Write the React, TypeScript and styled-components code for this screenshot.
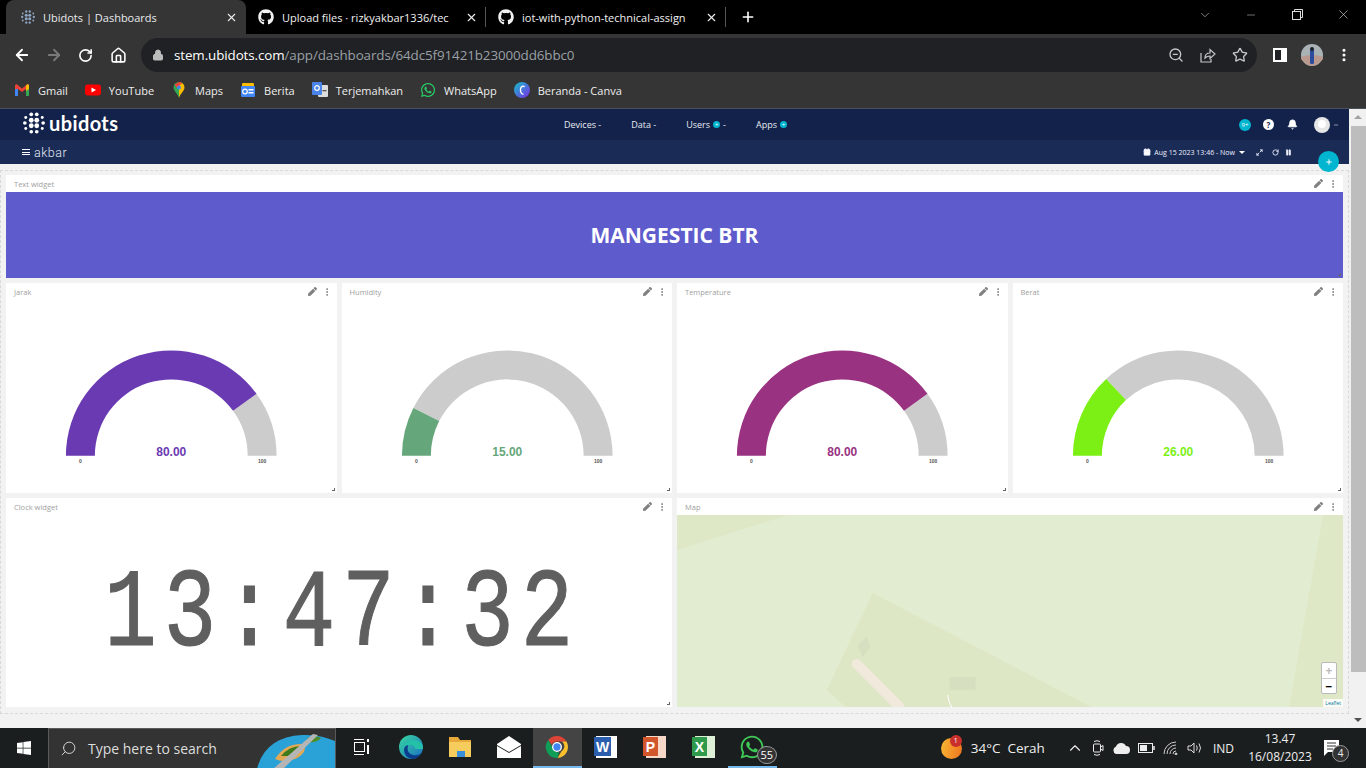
import React from "react";
import styled, { createGlobalStyle } from "styled-components";
import {
  ArrowLeft,
  ArrowRight,
  RotateCw,
  Home,
  Lock,
  ZoomOut,
  Star,
  X,
  Plus,
  ChevronDown,
  ChevronUp,
  Minus,
  Search,
  Bell,
  Maximize2,
  Pause,
  Calendar,
  MoreVertical,
} from "lucide-react";
import { FaGithub, FaWhatsapp, FaWindows, FaPen } from "react-icons/fa";

const Global = createGlobalStyle`
  html, body { margin: 0; padding: 0; height: 100%; overflow: hidden; }
  body { font-family: "Open Sans", "Liberation Sans", sans-serif; background: #f2f2f2; }
  * { box-sizing: border-box; }
`;

const Screen = styled.div`
  width: 1366px;
  height: 768px;
  display: flex;
  flex-direction: column;
  overflow: hidden;
`;

/* browser chrome */
const TabStrip = styled.div`
  height: 34px;
  background: #000;
  display: flex;
  align-items: flex-end;
  padding-left: 6px;
  color: #fff;
`;
const Tab = styled.div<{ $active?: boolean }>`
  width: 240px;
  height: 34px;
  display: flex;
  align-items: center;
  gap: 8px;
  padding: 0 8px 0 ${(p) => (p.$active ? 15 : 12)}px;
  font-size: 11px;
  border-radius: 8px 8px 0 0;
  background: ${(p) => (p.$active ? "#353535" : "transparent")};
  color: ${(p) => (p.$active ? "#e8eaed" : "#f1f1f1")};
  svg { flex: none; }
`;
const TabTitle = styled.span`
  flex: 1;
  overflow: hidden;
  white-space: nowrap;
`;
const TabDivider = styled.span`
  width: 1px;
  height: 20px;
  background: #555;
  margin: 0 0 7px -1px;
`;
const NewTab = styled.div`
  margin: 0 0 9px 14px;
  height: 16px;
  display: flex;
`;
const WindowButtons = styled.div`
  margin-left: auto;
  align-self: flex-start;
  display: flex;
  color: #ddd;
`;
const WindowButton = styled.div`
  width: 46px;
  height: 29px;
  display: flex;
  align-items: center;
  justify-content: center;
`;
const Toolbar = styled.div`
  height: 40px;
  background: #353535;
  display: flex;
  align-items: center;
  padding: 2px 0 0 11px;
  color: #fff;
`;
const NavIcon = styled.div<{ $w: number }>`
  width: ${(p) => p.$w}px;
  display: flex;
  justify-content: center;
  align-items: center;
`;
const Omnibox = styled.div`
  width: 1116px;
  height: 34px;
  margin-right: 13px;
  background: #202124;
  border-radius: 17px;
  display: flex;
  align-items: center;
  padding: 0 9px 0 11px;
  font-size: 13.4px;
  letter-spacing: -0.1px;
  color: #fff;
  gap: 10px;
`;
const UrlMuted = styled.span`
  color: #9aa0a6;
`;
const OmniIcons = styled.div`
  margin-left: auto;
  display: flex;
  gap: 16px;
  color: #c8c8c8;
`;
const Bookmarks = styled.div`
  height: 35px;
  background: #353535;
  border-bottom: 1px solid #4a4f5c;
  display: flex;
  align-items: center;
  padding: 0 0 2px 14px;
  gap: 17px;
  color: #eee;
  font-size: 11px;
`;
const Bookmark = styled.div`
  display: flex;
  align-items: center;
  gap: 8px;
`;

/* ubidots header */
const TopNav = styled.div`
  height: 31px;
  background: #13224a;
  display: grid;
  grid-template-columns: 1fr auto 1fr;
  align-items: center;
  color: #fff;
  padding: 0 10px 0 23px;
  margin-right: 17px;
`;
const Logo = styled.div`
  display: flex;
  align-items: center;
  gap: 4px;
  font-family: "Lato", sans-serif;
  font-weight: 700;
  font-size: 20px;
  letter-spacing: 0.4px;
  margin-bottom: 3px;
`;
const NavLinks = styled.div`
  display: flex;
  gap: 30px;
  font-size: 9px;
  color: #e8ebf2;
  margin-left: -11px;
`;
const NavLink = styled.span`
  display: flex;
  align-items: center;
  gap: 3px;
`;
const CyanDot = styled.span<{ $size?: number }>`
  width: ${(p) => p.$size ?? 7}px;
  height: ${(p) => p.$size ?? 7}px;
  border-radius: 50%;
  background: #00b5d0;
  display: inline-flex;
  align-items: center;
  justify-content: center;
  font-size: 6px;
  color: #fff;
`;
const NavRight = styled.div`
  justify-self: end;
  display: flex;
  align-items: center;
  gap: 11px;
`;
const HelpDot = styled.span`
  width: 11px;
  height: 11px;
  border-radius: 50%;
  background: #fff;
  color: #13224a;
  font-size: 8px;
  font-weight: 700;
  display: flex;
  align-items: center;
  justify-content: center;
  margin: 0 2px 0 1px;
`;
const Avatar = styled.span`
  width: 16px;
  height: 16px;
  border-radius: 50%;
  background: #e6e6e6;
  margin-left: 5px;
  margin-right: -8px;
  position: relative;
  overflow: hidden;
  &::after {
    content: "";
    position: absolute;
    left: 4px;
    top: 3px;
    width: 8px;
    height: 8px;
    border-radius: 50%;
    background: #fff;
  }
`;
const SubNav = styled.div`
  height: 24px;
  background: #1a2c56;
  margin-right: 17px;
  display: flex;
  align-items: center;
  justify-content: space-between;
  padding: 0 57px 0 22px;
  color: #fff;
  position: relative;
`;
const DashName = styled.div`
  display: flex;
  align-items: center;
  gap: 4px;
  font-size: 12.5px;
  font-family: "Roboto", sans-serif;
  font-weight: 300;
  letter-spacing: 0.5px;
  color: #e3e8f2;
`;
const Burger = styled.span`
  width: 8px;
  height: 6px;
  border-top: 1px solid #fff;
  border-bottom: 1px solid #fff;
  position: relative;
  &::after {
    content: "";
    position: absolute;
    left: 0;
    right: 0;
    top: 1.5px;
    height: 1px;
    background: #fff;
  }
`;
const DateBar = styled.div`
  display: flex;
  align-items: center;
  gap: 3px;
  font-size: 7px;
  color: #eef;
`;
const DateCaret = styled.span`
  width: 0;
  height: 0;
  border-left: 3px solid transparent;
  border-right: 3px solid transparent;
  border-top: 3px solid #fff;
  margin: 0 8px 0 1px;
`;
const DateRefresh = styled(RotateCw)`
  margin-left: 6px;
`;
const DatePause = styled(Pause)`
  margin-left: 3px;
`;
const AddButton = styled.div`
  position: absolute;
  right: 10px;
  top: 11px;
  width: 21px;
  height: 21px;
  border-radius: 50%;
  background: #00b5d0;
  color: #fff;
  display: flex;
  align-items: center;
  justify-content: center;
  z-index: 2;
`;

/* dashboard */
const Main = styled.div`
  flex: 1;
  display: flex;
  min-height: 0;
`;
const Board = styled.div`
  flex: 1;
  background: #f2f2f2;
  padding: 6px 0 0;
`;
const Canvas = styled.div`
  height: 544px;
  border: 1px dashed #d9d9d9;
  padding: 4px 5px 0 5px;
  display: grid;
  grid-template-columns: repeat(4, 1fr);
  grid-template-rows: 103px 210px 209px;
  gap: 5px;
`;
const Widget = styled.div<{ $span?: number }>`
  grid-column: span ${(p) => p.$span ?? 1};
  background: #fff;
  display: flex;
  flex-direction: column;
  position: relative;
  min-width: 0;
`;
const WidgetHead = styled.div`
  height: 17px;
  flex: none;
  display: flex;
  align-items: center;
  padding: 0 5px 0 8px;
  font-size: 7.5px;
  color: #a0a0a0;
`;
const WidgetTools = styled.div`
  margin-left: auto;
  display: flex;
  align-items: center;
  gap: 5px;
  color: #808080;
`;
const Banner = styled.div`
  flex: 1;
  background: #5e5bcd;
  color: #fff;
  font-size: 21px;
  font-weight: 700;
  display: flex;
  align-items: center;
  justify-content: center;
`;
const Resize = styled.span`
  position: absolute;
  right: 2px;
  bottom: 2px;
  width: 3px;
  height: 3px;
  border-right: 1px solid #666;
  border-bottom: 1px solid #666;
`;
const GaugeSvg = styled.svg`
  display: block;
  width: 100%;
  flex: 1;
`;
const ClockBody = styled.div`
  flex: 1;
  display: flex;
  align-items: center;
  justify-content: center;
  padding-top: 10px;
`;
const ClockText = styled.div`
  font-family: "Liberation Mono", monospace;
  font-size: 112px;
  line-height: 1;
  font-weight: 400;
  color: #5f5f5f;
  -webkit-text-stroke: 1.2px #5f5f5f;
  letter-spacing: 9.1px;
  margin-left: 6px;
  white-space: nowrap;
  transform: scaleX(0.78);
`;
const MapBody = styled.div`
  flex: 1;
  position: relative;
  background: #e2ecd0;
  overflow: hidden;
`;
const MapSvg = styled.svg`
  display: block;
  width: 100%;
  height: 100%;
`;
const ZoomControl = styled.div`
  position: absolute;
  right: 6px;
  bottom: 13px;
  width: 16px;
  height: 32px;
  background: #fff;
  border: 1px solid #bbb;
  border-radius: 2px;
  display: flex;
  flex-direction: column;
  font-size: 12px;
  font-weight: 700;
  line-height: 15px;
  text-align: center;
`;
const ZoomBtn = styled.span<{ $off?: boolean }>`
  flex: 1;
  color: ${(p) => (p.$off ? "#bbb" : "#000")};
  & + & { border-top: 1px solid #ccc; }
`;
const Attribution = styled.div`
  position: absolute;
  right: 0;
  bottom: 0;
  padding: 0 2px;
  background: rgba(255, 255, 255, 0.8);
  color: #0078a8;
  font-size: 5px;
  line-height: 8px;
`;
const Scrollbar = styled.div`
  width: 17px;
  background: #f1f1f1;
  display: flex;
  flex-direction: column;
  margin-top: -55px;
  z-index: 1;
  position: relative;
  align-items: center;
`;
const ScrollArrow = styled.span<{ $down?: boolean }>`
  width: 0;
  height: 0;
  border-left: 4px solid transparent;
  border-right: 4px solid transparent;
  ${(p) => (p.$down ? "border-top: 4px solid #505050;" : "border-bottom: 4px solid #a3a3a3;")}
  margin: 6px 0;
`;
const ScrollThumb = styled.div`
  width: 15px;
  height: 546px;
  margin-left: 1px;
  margin-top: 1px;
  background: #bdbdbd;
`;
const ScrollSpacer = styled.div`
  flex: 1;
`;

/* windows taskbar */
const Taskbar = styled.div`
  height: 40px;
  flex: none;
  background: #1b1e1f;
  display: flex;
  align-items: center;
  color: #fff;
`;
const StartBtn = styled.div`
  width: 48px;
  display: flex;
  justify-content: center;
`;
const SearchBox = styled.div`
  width: 288px;
  height: 40px;
  background: #333;
  border: 1px solid #5a5a5a;
  border-bottom: none;
  display: flex;
  align-items: center;
  padding-left: 11px;
  gap: 11px;
  font-size: 14px;
  color: #ddd;
  position: relative;
  overflow: hidden;
  margin-right: 2px;
`;
const SearchGlass = styled(Search)`
  transform: scaleX(-1);
`;
const Island = styled.svg`
  position: absolute;
  right: 0;
  top: 0;
`;
const TaskApp = styled.div<{ $active?: boolean; $open?: boolean }>`
  width: 48.75px;
  height: 40px;
  display: flex;
  align-items: center;
  justify-content: center;
  position: relative;
  background: ${(p) => (p.$active ? "#444" : "transparent")};
  border-bottom: 2px solid ${(p) => (p.$active || p.$open ? "#76b9ed" : "transparent")};
`;
const CountBadge = styled.span`
  position: absolute;
  right: 0;
  top: 18px;
  width: 20px;
  height: 18px;
  border-radius: 50%;
  border: 1px solid #999;
  background: #333;
  font-size: 11px;
  text-align: center;
  line-height: 16px;
`;
const Tray = styled.div`
  margin-left: auto;
  padding-right: 8px;
  display: flex;
  align-items: center;
  height: 40px;
  font-size: 13px;
  color: #eee;
`;
const Weather = styled.div`
  display: flex;
  align-items: center;
  gap: 9px;
  margin-right: 21px;
  font-size: 13.5px;
`;
const SunDot = styled.span`
  width: 21px;
  height: 21px;
  border-radius: 50%;
  background: linear-gradient(100deg, #f7b733, #f0741f);
  position: relative;
`;
const RedBadge = styled.span`
  position: absolute;
  right: 0;
  top: -3px;
  width: 12px;
  height: 12px;
  border-radius: 50%;
  background: #c9302c;
  color: #fff;
  font-size: 7px;
  line-height: 12px;
  text-align: center;
`;
const TrayIcons = styled.div`
  display: flex;
  align-items: center;
  gap: 8px;
  margin-right: 10px;
`;
const Lang = styled.span`
  font-size: 12px;
  margin-right: 14px;
`;
const ClockTray = styled.div`
  width: 64px;
  text-align: center;
  font-size: 12px;
  line-height: 18px;
`;
const Notify = styled.div`
  width: 42px;
  height: 40px;
  margin-left: 4px;
  position: relative;
  display: flex;
  align-items: center;
  padding-left: 8px;
`;
const NotifyCount = styled.span`
  position: absolute;
  right: 9px;
  top: 17px;
  width: 17px;
  height: 17px;
  border-radius: 50%;
  background: #333;
  border: 1px solid #999;
  font-size: 10px;
  line-height: 15px;
  text-align: center;
`;

const polar = (cx: number, cy: number, r: number, pct: number) => {
  const a = Math.PI * (1 - pct / 100);
  return [cx + r * Math.cos(a), cy - r * Math.sin(a)];
};
const arc = (cx: number, cy: number, ro: number, ri: number, from: number, to: number) => {
  const [x1, y1] = polar(cx, cy, ro, from);
  const [x2, y2] = polar(cx, cy, ro, to);
  const [x3, y3] = polar(cx, cy, ri, to);
  const [x4, y4] = polar(cx, cy, ri, from);
  return `M${x1} ${y1}A${ro} ${ro} 0 0 1 ${x2} ${y2}L${x3} ${y3}A${ri} ${ri} 0 0 0 ${x4} ${y4}Z`;
};

const Tools = () => (
  <WidgetTools>
    <FaPen size={9} />
    <MoreVertical size={10} strokeWidth={2.4} />
  </WidgetTools>
);

const Gauge: React.FC<{ title: string; value: number; color: string }> = ({ title, value, color }) => {
  const cx = 165.5;
  const cy = 156;
  return (
    <Widget>
      <WidgetHead>
        {title}
        <Tools />
      </WidgetHead>
      <GaugeSvg viewBox="0 0 331 192" preserveAspectRatio="xMidYMin meet">
        <path d={arc(cx, cy, 105.5, 76.5, value, 100)} fill="#cccccc" />
        <path d={arc(cx, cy, 105.5, 76.5, 0, value)} fill={color} />
        <text x={cx} y={cy} textAnchor="middle" fontFamily="Liberation Sans" fontWeight="700" fontSize="12" fill={color}>
          {value.toFixed(2)}
        </text>
        <text x={cx - 91} y={cy + 7} textAnchor="middle" fontFamily="Liberation Sans" fontWeight="700" fontSize="5" fill="#555">
          0
        </text>
        <text x={cx + 91} y={cy + 7} textAnchor="middle" fontFamily="Liberation Sans" fontWeight="700" fontSize="5" fill="#555">
          100
        </text>
      </GaugeSvg>
      <Resize />
    </Widget>
  );
};

const ChromeIcon = ({ size = 24 }: { size?: number }) => (
  <svg width={size} height={size} viewBox="0 0 24 24">
    <path d="M12 1a11 11 0 0 1 9.5 5.5H12a5.5 5.5 0 0 0-5.2 3.6L3.3 5A11 11 0 0 1 12 1z" fill="#db4437" />
    <path d="M21.5 6.5A11 11 0 0 1 12.6 23l4-7a5.5 5.5 0 0 0 0-9.5z" fill="#fbc02d" />
    <path d="M12.6 23A11 11 0 0 1 3.3 5l4.7 8.2A5.5 5.5 0 0 0 14 17.2z" fill="#0f9d58" />
    <circle cx="12" cy="12" r="4.3" fill="#4285f4" stroke="#fff" strokeWidth="1.3" />
  </svg>
);

const UbiDots = ({ size, color }: { size: number; color: string }) => (
  <svg width={size} height={size} viewBox="0 0 24 24" fill={color}>
    {[
      [9, 2.5, 2], [15, 2.5, 2], [3, 6, 1.6], [21, 6, 1.6],
      [2, 12, 2], [9, 9, 2.6], [15, 9, 2.6], [9, 15, 2.6], [15, 15, 2.6], [22, 12, 2],
      [3, 18, 1.6], [21, 18, 1.6], [9, 21.5, 2], [15, 21.5, 2],
    ].map(([x, y, r], i) => (
      <circle key={i} cx={x} cy={y} r={r} />
    ))}
  </svg>
);

const ShareIcon = () => (
  <svg width="16" height="16" viewBox="0 0 16 16" fill="none" stroke="currentColor" strokeWidth="1.2">
    <path d="M1 6v9h10v-3" />
    <path d="M5 11q0-5 5-5V2.500l5 4.500-5 4.500V9q-3 0-5 2z" />
  </svg>
);

const BookmarkIcons: Record<string, React.ReactNode> = {
  gmail: (
    <svg width="16" height="16" viewBox="0 0 16 16">
      <path d="M1 3v11h3V7l4 3 4-3v7h3V3l-1.5-1L8 6.5 2.5 2z" fill="#ea4335" />
      <path d="M1 7v7h3V7z" fill="#4285f4" />
      <path d="M12 7v7h3V7z" fill="#34a853" />
      <path d="M12 3.5 13.5 2 15 3v4l-3 2z" fill="#fbbc04" />
    </svg>
  ),
  youtube: (
    <svg width="16" height="16" viewBox="0 0 16 16">
      <rect y="2.5" width="16" height="11" rx="3" fill="#f00" />
      <path d="M6.5 5.5v5L11 8z" fill="#fff" />
    </svg>
  ),
  maps: (
    <svg width="16" height="16" viewBox="0 0 16 16">
      <path d="M8 0a5.5 5.5 0 0 0-5.5 5.5C2.5 9 6.5 11 8 16z" fill="#34a853" />
      <path d="M8 0a5.5 5.5 0 0 1 5.5 5.5C13.5 9 9.5 11 8 16z" fill="#fbbc04" />
      <path d="M3.5 2.5 8 0l3 1-5 5z" fill="#ea4335" />
      <circle cx="8" cy="5.5" r="2" fill="#4285f4" />
    </svg>
  ),
  berita: (
    <svg width="16" height="16" viewBox="0 0 16 16">
      <rect x="2" y="1" width="12" height="6" rx="1" fill="#fbbc04" />
      <rect x="1" y="4" width="14" height="11" rx="1" fill="#4285f4" />
      <rect x="8.5" y="7" width="5" height="1.5" fill="#fff" />
      <rect x="8.5" y="10" width="5" height="1.5" fill="#fff" />
      <circle cx="5" cy="9.5" r="2.3" fill="none" stroke="#fff" strokeWidth="1.2" />
    </svg>
  ),
  translate: (
    <svg width="16" height="16" viewBox="0 0 16 16">
      <rect x="6" y="3" width="10" height="12" rx="1" fill="#ddd" />
      <rect x="0" y="0" width="10" height="13" rx="1" fill="#4a84e8" />
      <circle cx="5" cy="6" r="2.3" fill="none" stroke="#fff" strokeWidth="1.2" />
      <rect x="10.5" y="8" width="4" height="1.3" fill="#555" />
    </svg>
  ),
  canva: (
    <svg width="16" height="16" viewBox="0 0 16 16">
      <defs>
        <linearGradient id="cv" x1="0" y1="0" x2="1" y2="1">
          <stop offset="0" stopColor="#12c2c9" />
          <stop offset="1" stopColor="#7d2ae8" />
        </linearGradient>
      </defs>
      <circle cx="8" cy="8" r="8" fill="url(#cv)" />
      <path d="M10.5 5a2.5 4 0 1 0-1 7" fill="none" stroke="#fff" strokeWidth="1.3" />
    </svg>
  ),
};

const App: React.FC = () => {
  return (
    <Screen>
      <Global />
      <TabStrip>
        <Tab $active>
          <UbiDots size={14} color="#8fa6c4" />
          <TabTitle>Ubidots | Dashboards</TabTitle>
          <X size={13} />
        </Tab>
        <Tab>
          <FaGithub size={16} />
          <TabTitle>Upload files · rizkyakbar1336/tec</TabTitle>
          <X size={13} />
        </Tab>
        <TabDivider />
        <Tab>
          <FaGithub size={16} />
          <TabTitle>iot-with-python-technical-assign</TabTitle>
          <X size={13} />
        </Tab>
        <TabDivider />
        <NewTab>
          <Plus size={16} strokeWidth={2.4} />
        </NewTab>
        <WindowButtons>
          <WindowButton>
            <ChevronDown size={14} strokeWidth={1} />
          </WindowButton>
          <WindowButton>
            <Minus size={12} strokeWidth={1} />
          </WindowButton>
          <WindowButton>
            <svg width="11" height="11" viewBox="0 0 11 11" fill="none" stroke="#ddd">
              <rect x="0.5" y="2.5" width="8" height="8" />
              <path d="M2.5 2.5v-2h8v8h-2" />
            </svg>
          </WindowButton>
          <WindowButton>
            <X size={15} strokeWidth={1} />
          </WindowButton>
        </WindowButtons>
      </TabStrip>

      <Toolbar>
        <NavIcon $w={21}>
          <ArrowLeft size={18} strokeWidth={2.4} />
        </NavIcon>
        <NavIcon $w={43}>
          <ArrowRight size={18} strokeWidth={2.4} color="#7a7a7a" />
        </NavIcon>
        <NavIcon $w={20}>
          <RotateCw size={15} strokeWidth={2.6} />
        </NavIcon>
        <NavIcon $w={46}>
          <Home size={17} strokeWidth={2.2} />
        </NavIcon>
        <Omnibox>
          <Lock size={12} color="#bbb" fill="#bbb" />
          <span>
            stem.ubidots.com<UrlMuted>/app/dashboards/64dc5f91421b23000dd6bbc0</UrlMuted>
          </span>
          <OmniIcons>
            <ZoomOut size={16} />
            <ShareIcon />
            <Star size={16} />
          </OmniIcons>
        </Omnibox>
        <NavIcon $w={20}>
          <svg width="14" height="14" viewBox="0 0 14 14">
            <rect width="14" height="14" fill="#fff" />
            <rect x="2" y="2" width="6" height="10" fill="#202124" />
          </svg>
        </NavIcon>
        <NavIcon $w={44}>
          <svg width="22" height="22" viewBox="0 0 22 22">
            <circle cx="11" cy="11" r="11" fill="#a9b3b5" />
            <path d="M0 13q11-4 22 0v2q-6 7-11 7t-11-7z" fill="#b99a8d" />
            <rect x="9" y="4" width="4" height="16" rx="1.5" fill="#2d4c9e" />
            <circle cx="11" cy="5" r="2" fill="#22242c" />
          </svg>
        </NavIcon>
        <NavIcon $w={20}>
          <MoreVertical size={16} strokeWidth={2.6} />
        </NavIcon>
      </Toolbar>

      <Bookmarks>
        <Bookmark>{BookmarkIcons.gmail}Gmail</Bookmark>
        <Bookmark>{BookmarkIcons.youtube}YouTube</Bookmark>
        <Bookmark>{BookmarkIcons.maps}Maps</Bookmark>
        <Bookmark>{BookmarkIcons.berita}Berita</Bookmark>
        <Bookmark>{BookmarkIcons.translate}Terjemahkan</Bookmark>
        <Bookmark>
          <FaWhatsapp size={16} color="#25d366" />
          WhatsApp
        </Bookmark>
        <Bookmark>{BookmarkIcons.canva}Beranda - Canva</Bookmark>
      </Bookmarks>

      <TopNav>
        <Logo>
          <UbiDots size={22} color="#fff" />
          ubidots
        </Logo>
        <NavLinks>
          <NavLink>Devices -</NavLink>
          <NavLink>Data -</NavLink>
          <NavLink>
            Users <CyanDot>+</CyanDot> -
          </NavLink>
          <NavLink>
            Apps <CyanDot>+</CyanDot>
          </NavLink>
        </NavLinks>
        <NavRight>
          <CyanDot $size={12}>9+</CyanDot>
          <HelpDot>?</HelpDot>
          <Bell size={11} fill="#fff" />
          <Avatar />
          <Minus size={6} />
        </NavRight>
      </TopNav>
      <SubNav>
        <DashName>
          <Burger />
          akbar
        </DashName>
        <DateBar>
          <Calendar size={8} fill="#fff" />
          Aug 15 2023 13:46 - Now
          <DateCaret />
          <Maximize2 size={7} strokeWidth={3} />
          <DateRefresh size={7} strokeWidth={3} />
          <DatePause size={7} fill="#fff" />
        </DateBar>
        <AddButton>
          <Plus size={8} strokeWidth={3} />
        </AddButton>
      </SubNav>

      <Main>
        <Board>
          <Canvas>
            <Widget $span={4}>
              <WidgetHead>
                Text widget
                <Tools />
              </WidgetHead>
              <Banner>MANGESTIC BTR</Banner>
              <Resize />
            </Widget>
            <Gauge title="Jarak" value={80} color="#6a3ab2" />
            <Gauge title="Humidity" value={15} color="#65a77b" />
            <Gauge title="Temperature" value={80} color="#993381" />
            <Gauge title="Berat" value={26} color="#7cf015" />
            <Widget $span={2}>
              <WidgetHead>
                Clock widget
                <Tools />
              </WidgetHead>
              <ClockBody>
                <ClockText>13:47:32</ClockText>
              </ClockBody>
              <Resize />
            </Widget>
            <Widget $span={2}>
              <WidgetHead>
                Map
                <Tools />
              </WidgetHead>
              <MapBody>
                <MapSvg viewBox="0 0 667 192" preserveAspectRatio="none">
                  <path d="M0 0H111L0 35z" fill="#dfe8c6" />
                  <path d="M647 0H667V192H613z" fill="#dfe8c6" />
                  <path d="M196 78 150 175 169 192H415z" fill="#dee7c5" />
                  <path d="M180 149 223 192" stroke="#f0e9dc" strokeWidth="10" strokeLinecap="round" />
                  <path d="M190 121 181 131 186 142 194 132z" fill="#d6dfbf" />
                  <rect x="273" y="162" width="26" height="13" fill="#d6dfbf" />
                  <path d="M271 180q1 7 4 12" stroke="#fff" fill="none" />
                </MapSvg>
                <ZoomControl>
                  <ZoomBtn $off>+</ZoomBtn>
                  <ZoomBtn>−</ZoomBtn>
                </ZoomControl>
                <Attribution>Leaflet</Attribution>
              </MapBody>
            </Widget>
          </Canvas>
        </Board>
        <Scrollbar>
          <ScrollArrow />
          <ScrollThumb />
          <ScrollSpacer />
          <ScrollArrow $down />
        </Scrollbar>
      </Main>

      <Taskbar>
        <StartBtn>
          <FaWindows size={16} />
        </StartBtn>
        <SearchBox>
          <SearchGlass size={17} strokeWidth={1.3} />
          Type here to search
          <Island width="78" height="40" viewBox="0 0 78 40">
            <path d="M0 40Q8 8 45 6Q62 5 78 12V40z" fill="#2aa2d8" />
            <path d="M18 30q10-16 28-15q6 8-8 15q-12 4-20 0z" fill="#e5a954" />
            <path d="M24 27q8-10 20-10q2 6-8 10z" fill="#3f7a1d" />
            <path d="M50 9q10-3 14 0q-4 5-12 4z" fill="#4e8c25" />
            <path d="M16 40 56 5l5 1L26 40z" fill="#b5b5b5" />
          </Island>
        </SearchBox>
        <TaskApp>
          <svg width="16" height="18" viewBox="0 0 16 18" fill="none" stroke="#fff">
            <path d="M0 1.5h10M0 16.5h10" />
            <rect x="0.5" y="4.5" width="10" height="9" />
            <path d="M14 1v3M14 7v9" strokeWidth="2" />
          </svg>
        </TaskApp>
        <TaskApp>
          <svg width="24" height="24" viewBox="0 0 24 24">
            <defs>
              <linearGradient id="edge" x1="0" y1="0" x2="1" y2="1">
                <stop offset="0" stopColor="#38d6a0" />
                <stop offset="1" stopColor="#1c6fc4" />
              </linearGradient>
            </defs>
            <circle cx="12" cy="12" r="12" fill="url(#edge)" />
            <path d="M24 13q-1-8-10-8-8 0-9 8 3-4 8-3 3 1 3 4h8z" fill="#25c0a8" />
            <path d="M13 24q-8-2-8-9 0-4 4-5-2 8 5 10 5 1 8-2-3 6-9 6z" fill="#0a3e8c" />
          </svg>
        </TaskApp>
        <TaskApp>
          <svg width="24" height="22" viewBox="0 0 24 22">
            <path d="M1 1h9l2 3h11v17H1z" fill="#e8a83a" />
            <rect x="1" y="6" width="22" height="15" fill="#f6cd5c" />
            <rect x="9" y="15" width="8" height="6" fill="#3a8fdb" />
          </svg>
        </TaskApp>
        <TaskApp>
          <svg width="24" height="22" viewBox="0 0 24 22">
            <path d="M0 8 12 0l12 8v14H0z" fill="#fff" />
            <path d="M0 9l12 7 12-7v1L12 17 0 10z" fill="#1b1e1f" />
          </svg>
        </TaskApp>
        <TaskApp $active>
          <ChromeIcon />
        </TaskApp>
        <TaskApp>
          <svg width="24" height="24" viewBox="0 0 24 24">
            <rect x="2" y="1" width="21" height="22" fill="#fff" />
            <rect x="0" y="2" width="17" height="19" fill="#2b5fae" />
            <text x="8.5" y="17" textAnchor="middle" fontSize="14" fontWeight="700" fontFamily="Liberation Sans" fill="#fff">
              W
            </text>
          </svg>
        </TaskApp>
        <TaskApp>
          <svg width="24" height="24" viewBox="0 0 24 24">
            <rect x="3" y="1" width="20" height="22" fill="#f6d8c8" />
            <rect x="0" y="2" width="15" height="19" fill="#d2562c" />
            <text x="7.5" y="16.5" textAnchor="middle" fontSize="14" fontWeight="700" fontFamily="Liberation Sans" fill="#fff">
              P
            </text>
          </svg>
        </TaskApp>
        <TaskApp>
          <svg width="24" height="24" viewBox="0 0 24 24">
            <rect x="3" y="1" width="20" height="22" fill="#dff0d8" />
            <rect x="0" y="2" width="15" height="19" fill="#2f9a4c" />
            <text x="7.5" y="16.5" textAnchor="middle" fontSize="14" fontWeight="700" fontFamily="Liberation Sans" fill="#fff">
              X
            </text>
          </svg>
        </TaskApp>
        <TaskApp $open>
          <FaWhatsapp size={26} color="#3ec855" />
          <CountBadge>55</CountBadge>
        </TaskApp>
        <Tray>
          <Weather>
            <SunDot>
              <RedBadge>1</RedBadge>
            </SunDot>
            34°C&nbsp; Cerah
          </Weather>
          <TrayIcons>
            <ChevronUp size={18} strokeWidth={1.5} />
            <svg width="12" height="18" viewBox="0 0 12 18" fill="none" stroke="#eee">
              <rect x="1.5" y="5" width="7" height="8" rx="1" />
              <path d="M8.5 8 11 6.5v5L8.5 10M2 2.5q3-1.5 6 0M2 15.5q3 1.5 6 0" />
            </svg>
            <svg width="18" height="12" viewBox="0 0 18 12" fill="#eee">
              <path d="M4 12a4 4 0 0 1 0-7.5A5.5 5.5 0 0 1 14 4a4 4 0 0 1 0 8z" />
            </svg>
            <svg width="17" height="10" viewBox="0 0 17 10" fill="none" stroke="#eee">
              <rect x="0.5" y="0.5" width="14" height="9" />
              <rect x="2" y="2" width="7" height="6" fill="#eee" stroke="none" />
              <path d="M16 3v4" strokeWidth="1.5" />
            </svg>
            <svg width="16" height="14" viewBox="0 0 16 14" fill="none" stroke="#ccc">
              <path d="M1 13A12 12 0 0 1 13 1M4 13a9 9 0 0 1 9-9M7 13a6 6 0 0 1 6-6M10 13a3 3 0 0 1 3-3" />
              <circle cx="13" cy="13" r="1" fill="#ccc" />
            </svg>
            <svg width="16" height="16" viewBox="0 0 16 16" fill="none" stroke="#ddd">
              <path d="M1 6h3l3-3v10l-3-3H1zM9.5 5.5q1.5 2.5 0 5M12 3.5q3 4.5 0 9" />
            </svg>
          </TrayIcons>
          <Lang>IND</Lang>
          <ClockTray>
            13.47
            <br />
            16/08/2023
          </ClockTray>
          <Notify>
            <svg width="16" height="16" viewBox="0 0 16 16">
              <path d="M0 0h15v12H4l-4 4z" fill="#fff" />
              <path d="M3 3h9M3 6h9M3 9h6" stroke="#333" />
            </svg>
            <NotifyCount>4</NotifyCount>
          </Notify>
        </Tray>
      </Taskbar>
    </Screen>
  );
};

export default App;
